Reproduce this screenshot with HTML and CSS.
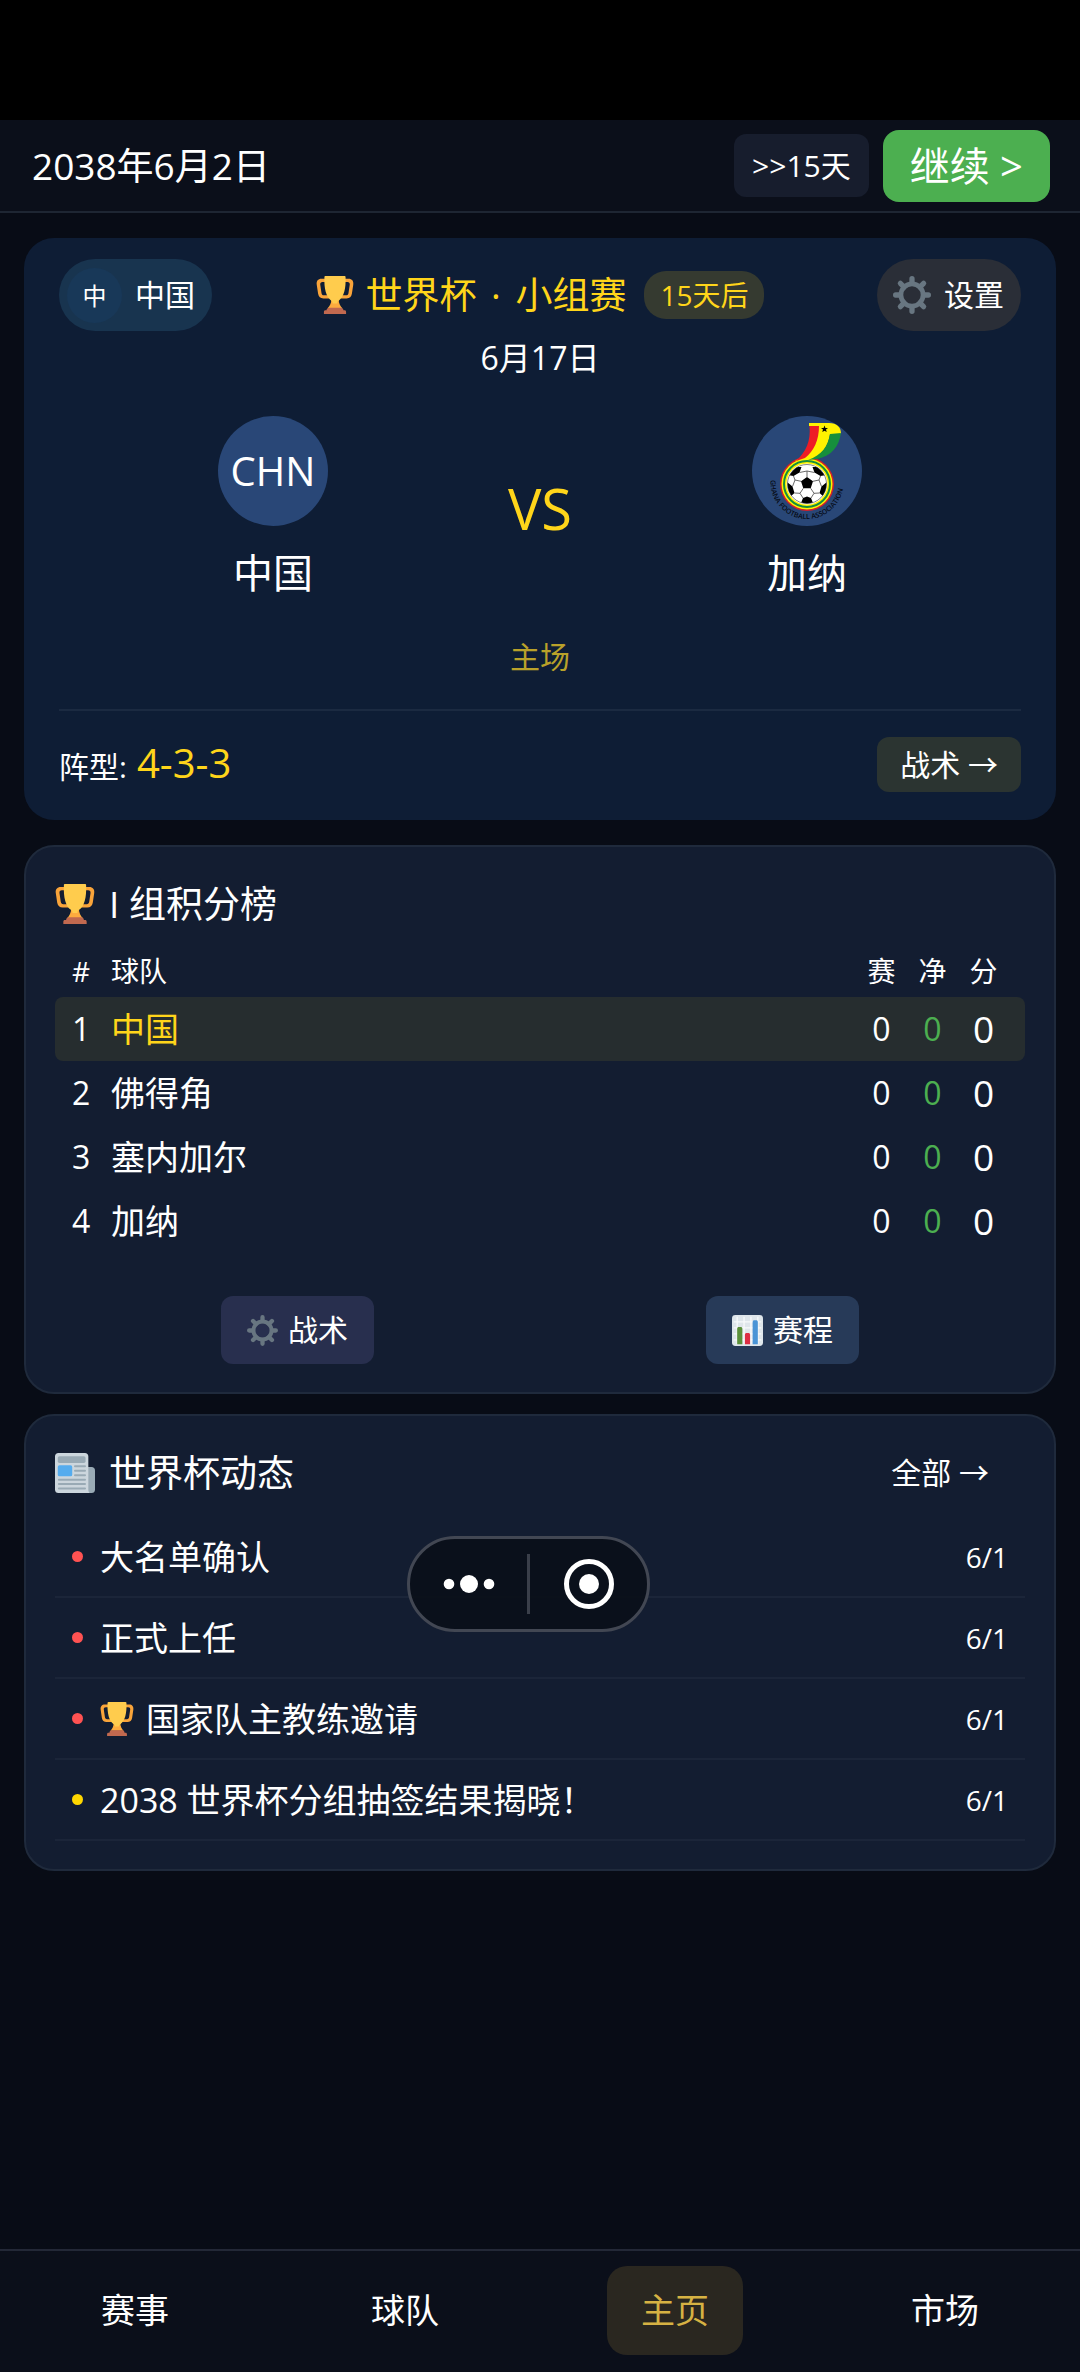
FILE: index.html
```
<!DOCTYPE html>
<html lang="zh-CN">
<head>
    <meta charset="UTF-8">
    <meta name="viewport" content="width=device-width, initial-scale=1.0">
    <title>世界杯 · 小组赛</title>
    <link rel="stylesheet" href="styles.css">
</head>
<body>
    <!-- Shared icons -->
    <svg class="sprite" aria-hidden="true">
        <symbol id="icon-trophy" viewBox="0 0 36 36">
            <path d="M5.2 2.6h6.3v3H6.2c-1.6 0-2.3.9-2.2 2.4l1.2 8c.2 1.500.9 2.200 2.300 2.200h5v3H7c-2.900 0-4.500-1.400-5-4.300L.7 8.200C.2 4.700 1.900 2.600 5.200 2.600zM30.800 2.600h-6.300v3h5.300c1.600 0 2.300.9 2.200 2.400l-1.200 8c-.2 1.500-.9 2.200-2.300 2.200h-5v3H29c2.900 0 4.500-1.400 5-4.300l1.300-8.700c.5-3.500-1.200-5.600-4.500-5.600z" fill="#f9a43a"/>
            <path d="M14.500 22h7c0 4 1.500 6.500 3.500 8.500H11c2-2 3.500-4.500 3.500-8.500z" fill="#fdab3e"/>
            <path d="M8 .8C8 .3 8.500 0 9 0h18c.5 0 1 .3 1 .8C28.500 12 26.500 20 21.500 23.500c-1 .8-1.300 1.500-1.300 2.500h-4.400c0-1-.3-1.700-1.300-2.500C9.500 20 7.500 12 8 .8z" fill="#ffcc4d"/>
            <path d="M10 32.500c0-1.500 1-2.500 2.500-2.500h11c1.500 0 2.500 1 2.500 2.500h1c1 0 1.500.6 1.500 1.500v2h-21v-2c0-.9.500-1.500 1.500-1.500z" fill="#c1694f"/>
        </symbol>
        <symbol id="icon-gear" viewBox="0 0 36 36">
            <g fill="none" stroke="#687681" stroke-linecap="round">
                <circle cx="18" cy="18" r="10.500" stroke-width="4.500"/>
                <path d="M18 2.500V7M18 29v4.500M2.500 18H7M29 18h4.500M7 7l3.500 3.500M25.500 25.500L29 29M7 29l3.500-3.500M25.500 10.500L29 7" stroke-width="5"/>
            </g>
        </symbol>
        <symbol id="icon-chart" viewBox="0 0 36 36">
            <rect width="36" height="36" rx="4" fill="#dfe6eb"/>
            <path d="M2 8h32M2 15h32M2 22h32M2 29h32M6 2v32M14 2v32M22 2v32M30 2v32" stroke="#f8fafb" stroke-width="1.500"/>
            <path d="M6 34V16c0-1.200.8-2 2-2h2c1.200 0 2 .8 2 2v18z" fill="#5c913b"/>
            <path d="M15 34V23c0-1.200.8-2 2-2h2c1.200 0 2 .8 2 2v11z" fill="#dd2e44"/>
            <path d="M24 34V8c0-1.200.8-2 2-2h2c1.200 0 2 .8 2 2v26z" fill="#4a94d6"/>
        </symbol>
        <symbol id="icon-news" viewBox="0 0 36 36">
            <path d="M27 12.500h6c1.700 0 3 1.300 3 3V33c0 1.700-1.300 3-3 3h-7z" fill="#99aab5"/>
            <path d="M3 0h24c1.700 0 3 1.300 3 3v30c0 1.200.4 2.200 1.200 3H3c-1.700 0-3-1.300-3-3V3c0-1.700 1.300-3 3-3z" fill="#ccd6dd"/>
            <rect x="2.500" y="3" width="25" height="6" rx="1.500" fill="#99aab5"/>
            <rect x="2.500" y="11" width="13" height="10" rx="1.500" fill="#55acee"/>
            <path d="M18 12h9M18 16h9M18 20h9M3.500 24h23.500M3.500 28h23.500M3.500 32h23.500" stroke="#99aab5" stroke-width="1.800" stroke-linecap="round"/>
        </symbol>
    </svg>

    <div class="status-bar"></div>

    <header class="top-bar">
        <div class="today">2038年6月2日</div>
        <div class="top-actions">
            <button class="btn-skip">&gt;&gt;15天</button>
            <button class="btn-continue">继续 &gt;</button>
        </div>
    </header>

    <main class="content">
        <!-- Next match -->
        <section class="match-card">
            <div class="match-head">
                <button class="pill pill-team"><span class="pill-badge">中</span>中国</button>
                <div class="match-info">
                    <h1 class="match-title">
                        <svg class="icon-md"><use href="#icon-trophy"/></svg>
                        <span>世界杯<span class="sep"> · </span>小组赛</span>
                        <span class="countdown">15天后</span>
                    </h1>
                    <div class="match-date">6月17日</div>
                </div>
                <button class="pill pill-settings"><svg class="icon-md"><use href="#icon-gear"/></svg>设置</button>
            </div>

            <div class="versus">
                <div class="team">
                    <div class="crest">CHN</div>
                    <div class="team-name">中国</div>
                </div>
                <div class="vs">VS</div>
                <div class="team">
                    <div class="crest">
                        <svg viewBox="0 0 110 110" class="crest-art">
                            <defs>
                                <path id="crest-arc" d="M18.500 64a36.500 37 0 0 0 73 4"/>
                                <clipPath id="ball-clip"><circle cx="55" cy="68" r="19.500"/></clipPath>
                            </defs>
                            <circle cx="55" cy="68" r="27" fill="#d3202a"/>
                            <circle cx="55" cy="68" r="25.500" fill="#fff200"/>
                            <path d="M57 7h20c8 0 12 4 12 11H78c-2 13-8 21-17 25l-18 2c15-7 22-18 23-35h-9z" fill="#fff200"/>
                            <path d="M57.500 10H67c0 14-5 25-14 32l-9 3c10-9 15-20 13.500-35z" fill="#ee1c25"/>
                            <path d="M78 18l11-1c-2 13-9 23-24 26l-9 1c14-5 20-14 22-26z" fill="#168f3c"/>
                            <path d="M72.500 9.500l.9 2.400 2.600.1-2 1.600.7 2.500-2.200-1.400-2.200 1.400.7-2.500-2-1.600 2.600-.1z" fill="#000"/>
                            <circle cx="55" cy="68" r="23" fill="#fff200" stroke="#178f3b" stroke-width="2"/>
                            <circle cx="55" cy="68" r="20.500" fill="#fff"/>
                            <g clip-path="url(#ball-clip)">
                                <path d="M55 61l6 4.300-2.300 7h-7.400l-2.300-7zM40 51h9.500l-2 5.500-6 3.500-6-1zM70 51h-9.500l2 5.500 6 3.500 6-1zM35 66l5.500 4.500 2 6.500-4.500 4-6-5zM75 66l-5.500 4.500-2 6.500 4.500 4 6-5zM51 82l4-1.500 4 1.500 2 5-6 4-6-4z" fill="#000"/>
                                <path d="M55 61v-6l-7.500 1.500M55 55l7.500 1.500M49 65.300l-6-1.300-1.500-4M61 65.300l6-1.300 1.500-4M43 64l-2.500 6.500M67 64l2.500 6.500M51.300 72.300l-3.300 5-5.500-.3M58.700 72.300l3.300 5 5.500-.3M48 77.300l3 4.700M62 77.300L59 82" fill="none" stroke="#444" stroke-width=".8"/>
                            </g>
                            <circle cx="55" cy="68" r="19.500" fill="none" stroke="#333" stroke-width=".6"/>
                            <text class="crest-text"><textPath href="#crest-arc">GHANA FOOTBALL ASSOCIATION</textPath></text>
                        </svg>
                    </div>
                    <div class="team-name">加纳</div>
                </div>
            </div>

            <div class="venue">主场</div>

            <div class="match-foot">
                <div class="formation">阵型: <strong>4-3-3</strong></div>
                <button class="btn-tactics">战术 →</button>
            </div>
        </section>

        <!-- Group standings -->
        <section class="card">
            <div class="card-head">
                <h2 class="card-title"><svg class="icon-lg"><use href="#icon-trophy"/></svg>I 组积分榜</h2>
            </div>
            <table class="standings">
                <thead>
                    <tr>
                        <th class="rank">#</th>
                        <th class="name">球队</th>
                        <th class="num">赛</th>
                        <th class="num">净</th>
                        <th class="num last">分</th>
                    </tr>
                </thead>
                <tbody>
                    <tr class="mine">
                        <td class="rank">1</td>
                        <td class="name">中国</td>
                        <td class="num">0</td>
                        <td class="num diff">0</td>
                        <td class="num last">0</td>
                    </tr>
                    <tr>
                        <td class="rank">2</td>
                        <td class="name">佛得角</td>
                        <td class="num">0</td>
                        <td class="num diff">0</td>
                        <td class="num last">0</td>
                    </tr>
                    <tr>
                        <td class="rank">3</td>
                        <td class="name">塞内加尔</td>
                        <td class="num">0</td>
                        <td class="num diff">0</td>
                        <td class="num last">0</td>
                    </tr>
                    <tr>
                        <td class="rank">4</td>
                        <td class="name">加纳</td>
                        <td class="num">0</td>
                        <td class="num diff">0</td>
                        <td class="num last">0</td>
                    </tr>
                </tbody>
            </table>
            <div class="card-actions">
                <button class="btn-card purple"><svg class="icon-sm"><use href="#icon-gear"/></svg>战术</button>
                <button class="btn-card blue"><svg class="icon-sm"><use href="#icon-chart"/></svg>赛程</button>
            </div>
        </section>

        <!-- News -->
        <section class="card">
            <div class="card-head">
                <h2 class="card-title"><svg class="icon-lg"><use href="#icon-news"/></svg>世界杯动态</h2>
                <button class="btn-all">全部 →</button>
            </div>
            <ul class="news">
                <li><span class="dot"></span><span class="headline">大名单确认</span><time>6/1</time></li>
                <li><span class="dot"></span><span class="headline">正式上任</span><time>6/1</time></li>
                <li><span class="dot"></span><span class="headline"><svg class="icon-news"><use href="#icon-trophy"/></svg>国家队主教练邀请</span><time>6/1</time></li>
                <li><span class="dot gold"></span><span class="headline">2038 世界杯分组抽签结果揭晓！</span><time>6/1</time></li>
            </ul>
        </section>
    </main>

    <nav class="tab-bar">
        <a href="#">赛事</a>
        <a href="#">球队</a>
        <a href="#" class="active">主页</a>
        <a href="#">市场</a>
    </nav>

    <!-- Floating mini-program capsule -->
    <div class="capsule">
        <button aria-label="更多">
            <svg width="54" height="54" viewBox="0 0 54 54" fill="#fff">
                <circle cx="7" cy="27" r="5.300"/>
                <circle cx="27" cy="27" r="9"/>
                <circle cx="47" cy="27" r="5.300"/>
            </svg>
        </button>
        <span class="capsule-line"></span>
        <button aria-label="关闭">
            <svg width="54" height="54" viewBox="0 0 54 54">
                <circle cx="27" cy="27" r="22.500" fill="none" stroke="#fff" stroke-width="5"/>
                <circle cx="27" cy="27" r="10" fill="#fff"/>
            </svg>
        </button>
    </div>
</body>
</html>
```

FILE: styles.css
```
* {
    box-sizing: border-box;
}

body {
    margin: 0;
    min-height: 100vh;
    display: flex;
    flex-direction: column;
    position: relative;
    background: #080c16;
    color: #fff;
    font-family: "Open Sans", "Noto Sans CJK SC", sans-serif;
    font-size: 34px;
}

h1, h2 {
    margin: 0;
    font-weight: normal;
}

button {
    border: none;
    padding: 0;
    background: none;
    color: #fff;
    font-family: inherit;
    font-size: 30px;
    line-height: 40px;
    cursor: pointer;
}

.sprite {
    position: absolute;
    width: 0;
    height: 0;
}

.icon-sm { width: 31px; height: 31px; }
.icon-news { width: 34px; height: 34px; }
.icon-md { width: 38px; height: 38px; }
.icon-lg { width: 40px; height: 40px; }

/* Header */
.status-bar {
    height: 120px;
    background: #000;
}

.top-bar {
    display: flex;
    align-items: center;
    justify-content: space-between;
    height: 93px;
    padding: 0 30px 0 32px;
    background: #0b0f1a;
    border-bottom: 2px solid #1e2633;
}

.today {
    font-size: 37px;
    line-height: 50px;
}

.top-actions {
    display: flex;
    align-items: center;
    gap: 14px;
}

.btn-skip {
    height: 63px;
    padding: 0 18px;
    border-radius: 12px;
    background: #171d2d;
}

.btn-continue {
    height: 72px;
    padding: 0 27px;
    border-radius: 16px;
    background: #4caf50;
    font-size: 40px;
}

/* Match card */
.content {
    flex: 1;
    padding: 25px 24px 0;
}

.match-card {
    margin-bottom: 25px;
    padding: 21px 35px 28px;
    border-radius: 30px;
    background: #0e1d35;
}

.match-head {
    display: grid;
    grid-template-columns: 1fr auto 1fr;
    align-items: start;
}

.pill {
    display: flex;
    align-items: center;
    height: 72px;
    gap: 13px;
    border-radius: 36px;
}

.pill-team {
    justify-self: start;
    padding: 0 17px 0 8px;
    background: #18344f;
}

.pill-badge {
    width: 55px;
    line-height: 55px;
    border-radius: 50%;
    background: #183858;
    font-size: 24px;
}

.pill-settings {
    justify-self: end;
    padding: 0 17px 0 16px;
    background: #2a2e37;
}

.match-info {
    text-align: center;
}

.match-title {
    display: flex;
    align-items: center;
    height: 72px;
    gap: 12px;
    font-size: 37px;
    line-height: 50px;
    color: #ffd51a;
}

.match-title .sep {
    margin: 0 5px;
}

.countdown {
    margin-left: 6px;
    padding: 0 16px;
    border-radius: 22px;
    background: #353a30;
    font-size: 28px;
    line-height: 48px;
}

.match-date {
    font-size: 32px;
    line-height: 53px;
}

.versus {
    display: flex;
    align-items: center;
    margin-top: 32px;
}

.team {
    flex: 1;
    display: flex;
    flex-direction: column;
    align-items: center;
    gap: 20px;
}

.crest {
    width: 110px;
    height: 110px;
    border-radius: 50%;
    background: #294777;
    font-size: 40px;
    line-height: 110px;
    text-align: center;
}

.crest-art {
    display: block;
}

.crest-text {
    font-size: 7px;
    font-weight: 600;
    fill: #050a14;
}

.team-name {
    font-size: 40px;
    line-height: 54px;
}

.vs {
    padding: 0 21px;
    font-size: 56px;
    line-height: 70px;
    color: #ffd51a;
}

.venue {
    margin-top: 34px;
    font-size: 30px;
    line-height: 46px;
    text-align: center;
    color: #b9a12a;
}

.match-foot {
    display: flex;
    align-items: center;
    justify-content: space-between;
    margin-top: 29px;
    padding-top: 26px;
    border-top: 2px solid #1b2a41;
}

.formation {
    display: flex;
    align-items: baseline;
    gap: 10px;
    font-size: 30px;
    line-height: 40px;
}

.formation strong {
    font-size: 40px;
    font-weight: normal;
    color: #ffd51a;
}

.btn-tactics {
    height: 55px;
    padding: 0 23px;
    border-radius: 12px;
    background: #2b3431;
}

/* Cards */
.card {
    margin-bottom: 20px;
    padding: 29px 29px 28px;
    border: 2px solid #1f2a3c;
    border-radius: 30px;
    background: #131d31;
}

.card-head {
    display: flex;
    align-items: center;
    justify-content: space-between;
}

.card-title {
    display: flex;
    align-items: center;
    gap: 14px;
    font-size: 37px;
    line-height: 56px;
}

.btn-all {
    padding: 0 36px;
}

.standings {
    width: 100%;
    margin-top: 13px;
    border-collapse: collapse;
    table-layout: fixed;
}

.standings th {
    height: 52px;
    padding: 0;
    font-size: 28px;
    font-weight: normal;
    line-height: 40px;
}

.standings td {
    height: 64px;
    padding: 0;
    font-size: 32px;
    line-height: 44px;
}

.standings .rank {
    width: 56px;
    padding-left: 17px;
    text-align: left;
}

.standings .name {
    text-align: left;
}

.standings td.name {
    font-size: 34px;
}

.standings .num {
    width: 51px;
    text-align: center;
}

.standings .last {
    width: 67px;
    padding-right: 16px;
}

.standings td.last {
    font-size: 37px;
}

.diff {
    color: #4caf50;
}

.mine td {
    background: #262d2f;
}

.mine td:first-child {
    border-radius: 8px 0 0 8px;
}

.mine td:last-child {
    border-radius: 0 8px 8px 0;
}

.mine .name {
    color: #ffd51a;
}

.card-actions {
    display: grid;
    grid-template-columns: 1fr 1fr;
    justify-items: center;
    margin-top: 43px;
}

.btn-card {
    display: flex;
    align-items: center;
    gap: 10px;
    height: 68px;
    padding: 0 26px;
    border-radius: 12px;
}

.purple { background: #282f4e; }
.blue { background: #273a58; }

/* News */
.news {
    list-style: none;
    margin: 16px 0 0;
    padding: 0;
}

.news li {
    display: flex;
    align-items: center;
    height: 81px;
    padding: 0 17px;
    border-bottom: 2px solid #1b2539;
}

.dot {
    width: 11px;
    height: 11px;
    border-radius: 50%;
    background: #ff5252;
}

.dot.gold {
    background: #ffd700;
}

.headline {
    flex: 1;
    display: flex;
    align-items: center;
    gap: 12px;
    margin-left: 17px;
    line-height: 46px;
}

.news time {
    font-size: 28px;
}

/* Bottom tabs */
.tab-bar {
    display: flex;
    padding: 15px 0 17px;
    background: #0b0f1a;
    border-top: 2px solid #232837;
}

.tab-bar a {
    margin: 0 auto;
    width: 136px;
    line-height: 89px;
    border-radius: 20px;
    text-align: center;
    text-decoration: none;
    color: #fff;
}

.tab-bar .active {
    background: #2a2720;
    color: #d6b243;
}

/* Capsule floats over the page */
.capsule {
    position: absolute;
    top: 1536px;
    left: 407px;
    display: flex;
    align-items: center;
    width: 243px;
    height: 96px;
    border: 3px solid #424753;
    border-radius: 48px;
    background: rgba(10, 15, 25, 0.92);
}

.capsule button {
    flex: 1;
    height: 54px;
}

.capsule-line {
    width: 3px;
    height: 60px;
    background: #3a3f4a;
}
```
